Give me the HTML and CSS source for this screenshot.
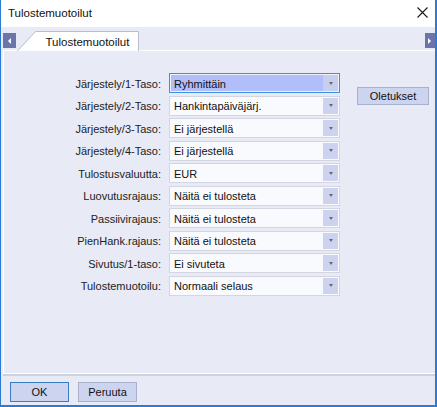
FILE: index.html
```html
<!DOCTYPE html>
<html lang="fi">
<head>
<meta charset="utf-8">
<title>Tulostemuotoilut</title>
<link rel="stylesheet" href="styles.css">
</head>
<body>
<div class="window">
  <div class="titlebar">
    <span class="title">Tulostemuotoilut</span>
    <svg class="close" width="11" height="11" viewBox="0 0 11 11"><path d="M0.5 0.5 L10.5 10.5 M10.5 0.5 L0.5 10.5" stroke="#1a1a1a" stroke-width="1.1" fill="none"/></svg>
  </div>
  <div class="tabstrip">
    <div class="scroll scroll-left"><span class="tri-left"></span></div>
    <div class="tab">
      <svg class="tab-shape" width="123" height="20" viewBox="0 0 123 20"><path d="M0.5 20 L18.5 0.5 L121.5 0.5 L121.5 20" fill="#ffffff" stroke="#b9bdcc" stroke-width="1"/></svg>
      <span class="tab-label">Tulostemuotoilut</span>
    </div>
    <div class="spacer"></div>
    <div class="scroll scroll-right"><span class="tri-right"></span></div>
  </div>
  <div class="panel">
    <div class="form">
      <label class="lbl">Järjestely/1-Taso:</label>
      <div class="combo selected"><span class="val">Ryhmittäin</span><span class="drop"></span></div>
      <label class="lbl">Järjestely/2-Taso:</label>
      <div class="combo"><span class="val">Hankintapäiväjärj.</span><span class="drop"></span></div>
      <label class="lbl">Järjestely/3-Taso:</label>
      <div class="combo"><span class="val">Ei järjestellä</span><span class="drop"></span></div>
      <label class="lbl">Järjestely/4-Taso:</label>
      <div class="combo"><span class="val">Ei järjestellä</span><span class="drop"></span></div>
      <label class="lbl">Tulostusvaluutta:</label>
      <div class="combo"><span class="val">EUR</span><span class="drop"></span></div>
      <label class="lbl">Luovutusrajaus:</label>
      <div class="combo"><span class="val">Näitä ei tulosteta</span><span class="drop"></span></div>
      <label class="lbl">Passiivirajaus:</label>
      <div class="combo"><span class="val">Näitä ei tulosteta</span><span class="drop"></span></div>
      <label class="lbl">PienHank.rajaus:</label>
      <div class="combo"><span class="val">Näitä ei tulosteta</span><span class="drop"></span></div>
      <label class="lbl">Sivutus/1-taso:</label>
      <div class="combo"><span class="val">Ei sivuteta</span><span class="drop"></span></div>
      <label class="lbl">Tulostemuotoilu:</label>
      <div class="combo"><span class="val">Normaali selaus</span><span class="drop"></span></div>
    </div>
    <button class="btn btn-defaults">Oletukset</button>
  </div>
  <div class="footer">
    <button class="btn btn-ok">OK</button>
    <button class="btn btn-cancel">Peruuta</button>
  </div>
</div>
</body>
</html>
```
FILE: styles.css
```css
* { box-sizing: border-box; }
html, body { margin: 0; padding: 0; }
body {
  width: 437px;
  height: 407px;
  font-family: "Liberation Sans", Arial, sans-serif;
  font-size: 11px;
  color: #1a1a1a;
  background: #ffffff;
}
.window {
  width: 437px;
  height: 407px;
  border-left: 1px solid #2b7bd4;
  border-right: 2px solid #2b7bd4;
  border-bottom: 2px solid #2b7bd4;
  background: #e8ebf6;
  display: flex;
  flex-direction: column;
}
.titlebar {
  height: 27px;
  background: #ffffff;
  display: flex;
  align-items: center;
  padding: 0 0 1px 7px;
}
.title {
  font-size: 11.5px;
  color: #111;
  flex: 1;
}
.close {
  margin-right: 7px;
  margin-top: -2px;
}
.tabstrip {
  height: 23px;
  display: flex;
  align-items: flex-start;
  padding-left: 2px;
}
.scroll {
  width: 13px;
  height: 15px;
  margin-top: 6px;
  background: #6b75ab;
  display: flex;
  align-items: center;
  justify-content: center;
}
.scroll-right { width: 10px; }
.tri-left {
  width: 0; height: 0;
  border-top: 3px solid transparent;
  border-bottom: 3px solid transparent;
  border-right: 3px solid #ffffff;
}
.tri-right {
  width: 0; height: 0;
  border-top: 3px solid transparent;
  border-bottom: 3px solid transparent;
  border-left: 3px solid #ffffff;
  margin-right: 1px;
}
.tab {
  position: relative;
  width: 123px;
  height: 20px;
  margin-top: 4px;
  margin-left: 1px;
  display: flex;
  align-items: center;
  justify-content: center;
  padding-left: 18px;
  padding-top: 1px;
}
.tab-shape {
  position: absolute;
  left: 0;
  top: 0;
}
.tab-label {
  position: relative;
  font-size: 11.5px;
  color: #111;
}
.spacer { flex: 1; }
.panel {
  height: 324px;
  margin-left: 2px;
  border-top: 1px solid #ffffff;
  border-left: 1px solid #ffffff;
  border-bottom: 1px solid #ffffff;
  box-shadow: 0 2px 0 #cdd1dd;
  display: flex;
  align-items: flex-start;
  padding-top: 22px;
}
.form {
  display: grid;
  grid-template-columns: 157px 171px;
  column-gap: 8px;
  row-gap: 2.5px;
  grid-auto-rows: 20px;
}
.lbl {
  text-align: right;
  align-self: center;
  color: #222;
  padding-top: 1px;
}
.combo {
  display: flex;
  align-items: stretch;
  border: 1px solid #d3d6e0;
  background: #f9fafe;
  padding: 1px;
}
.combo .val {
  flex: 1;
  display: flex;
  align-items: center;
  padding-left: 3px;
  color: #111;
  padding-top: 1px;
}
.combo .drop {
  width: 15px;
  background: #cdd3ee;
  display: flex;
  align-items: center;
  justify-content: center;
}
.combo .drop::after {
  content: "";
  width: 0; height: 0;
  border-left: 2.5px solid transparent;
  border-right: 2.5px solid transparent;
  border-top: 3px solid #6a6a72;
}
.combo.selected {
  border-color: #3d8fe2;
  background: #eef1fc;
}
.combo.selected .val {
  background: #b2befa;
}
.combo.selected .drop {
  background: #c8cfee;
}
.btn {
  font-family: "Liberation Sans", Arial, sans-serif;
  font-size: 11px;
  color: #111;
  background: #cdd4ef;
  border: 1px solid #a9b0cb;
  padding: 0;
  margin: 0;
  display: flex;
  align-items: center;
  justify-content: center;
}
.btn-defaults {
  width: 72px;
  height: 18px;
  margin-left: 17px;
  margin-top: 14px;
}
.footer {
  display: flex;
  gap: 9px;
  padding: 8px 0 0 9px;
}
.btn-ok, .btn-cancel {
  width: 59px;
  height: 20px;
}
.btn-ok {
  border-color: #3a7cbd;
}
```
